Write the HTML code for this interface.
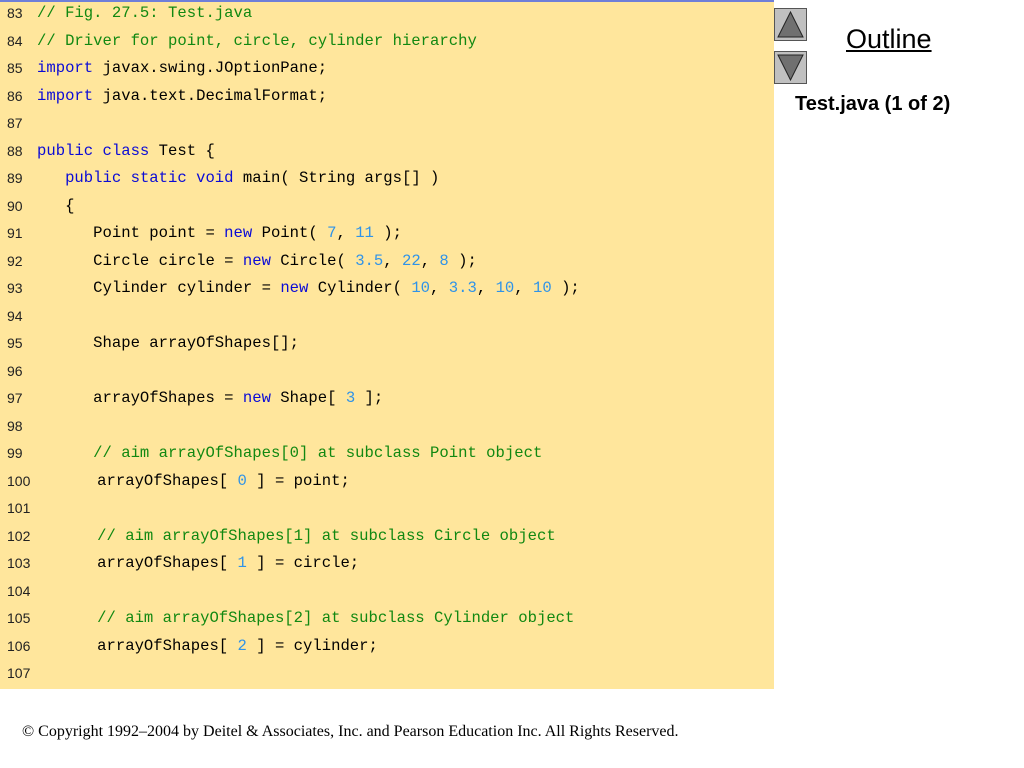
<!DOCTYPE html>
<html><head><meta charset="utf-8"><style>
body{margin:0;width:1024px;height:768px;background:#fff;position:relative;overflow:hidden;font-family:"Liberation Sans",sans-serif}
#code{position:absolute;left:0;top:0;width:774px;height:689px;background:#FFE69C;border-top:2px solid #6f7fd8;box-sizing:border-box}
.l{position:absolute;left:0;height:27px;line-height:22px;white-space:pre}
.n{position:absolute;left:7px;font-size:14px;color:#222}
.c{position:absolute;left:37px;font-family:"Liberation Mono",monospace;font-size:15.6px;color:#000}
.c2{left:41px}
.g{color:#118811}.k{color:#0b0bd6}.d{color:#2f93e8}
.btn{position:absolute;left:774px;width:33px;height:33px;background:#c0c0c0;border:1px solid #555;box-sizing:border-box}
</style></head><body>
<div id="code">
<div class="l" style="top:0px"><span class="n">83</span><span class="c g">// Fig. 27.5: Test.java</span></div>
<div class="l" style="top:27.5px"><span class="n">84</span><span class="c g">// Driver for point, circle, cylinder hierarchy</span></div>
<div class="l" style="top:55px"><span class="n">85</span><span class="c"><span class="k">import</span> javax.swing.JOptionPane;</span></div>
<div class="l" style="top:82.5px"><span class="n">86</span><span class="c"><span class="k">import</span> java.text.DecimalFormat;</span></div>
<div class="l" style="top:110px"><span class="n">87</span></div>
<div class="l" style="top:137.5px"><span class="n">88</span><span class="c"><span class="k">public class</span> Test {</span></div>
<div class="l" style="top:165px"><span class="n">89</span><span class="c">   <span class="k">public static void</span> main( String args[] )</span></div>
<div class="l" style="top:192.5px"><span class="n">90</span><span class="c">   {</span></div>
<div class="l" style="top:220px"><span class="n">91</span><span class="c">      Point point = <span class="k">new</span> Point( <span class="d">7</span>, <span class="d">11</span> );</span></div>
<div class="l" style="top:247.5px"><span class="n">92</span><span class="c">      Circle circle = <span class="k">new</span> Circle( <span class="d">3.5</span>, <span class="d">22</span>, <span class="d">8</span> );</span></div>
<div class="l" style="top:275px"><span class="n">93</span><span class="c">      Cylinder cylinder = <span class="k">new</span> Cylinder( <span class="d">10</span>, <span class="d">3.3</span>, <span class="d">10</span>, <span class="d">10</span> );</span></div>
<div class="l" style="top:302.5px"><span class="n">94</span></div>
<div class="l" style="top:330px"><span class="n">95</span><span class="c">      Shape arrayOfShapes[];</span></div>
<div class="l" style="top:357.5px"><span class="n">96</span></div>
<div class="l" style="top:385px"><span class="n">97</span><span class="c">      arrayOfShapes = <span class="k">new</span> Shape[ <span class="d">3</span> ];</span></div>
<div class="l" style="top:412.5px"><span class="n">98</span></div>
<div class="l" style="top:440px"><span class="n">99</span><span class="c g">      // aim arrayOfShapes[0] at subclass Point object</span></div>
<div class="l" style="top:467.5px"><span class="n">100</span><span class="c c2">      arrayOfShapes[ <span class="d">0</span> ] = point;</span></div>
<div class="l" style="top:495px"><span class="n">101</span></div>
<div class="l" style="top:522.5px"><span class="n">102</span><span class="c c2 g">      // aim arrayOfShapes[1] at subclass Circle object</span></div>
<div class="l" style="top:550px"><span class="n">103</span><span class="c c2">      arrayOfShapes[ <span class="d">1</span> ] = circle;</span></div>
<div class="l" style="top:577.5px"><span class="n">104</span></div>
<div class="l" style="top:605px"><span class="n">105</span><span class="c c2 g">      // aim arrayOfShapes[2] at subclass Cylinder object</span></div>
<div class="l" style="top:632.5px"><span class="n">106</span><span class="c c2">      arrayOfShapes[ <span class="d">2</span> ] = cylinder;</span></div>
<div class="l" style="top:660px"><span class="n">107</span></div>
</div>
<div class="btn" style="top:8px"><svg width="31" height="31"><polygon points="15.5,3 28,28 3,28" fill="#707070" stroke="#222" stroke-width="1"/></svg></div>
<div class="btn" style="top:51px"><svg width="31" height="31"><polygon points="3,3 28,3 15.5,28" fill="#707070" stroke="#222" stroke-width="1"/></svg></div>
<div style="position:absolute;left:846px;top:24px;font-size:27px;text-decoration:underline;color:#000">Outline</div>
<div style="position:absolute;left:795px;top:93px;font-size:20px;font-weight:bold;color:#000">Test.java (1 of 2)</div>
<div style="position:absolute;left:22px;top:723px;font-family:'Liberation Serif',serif;font-size:16px;color:#000">© Copyright 1992–2004 by Deitel &amp; Associates, Inc. and Pearson Education Inc. All Rights Reserved.</div>
</body></html>
